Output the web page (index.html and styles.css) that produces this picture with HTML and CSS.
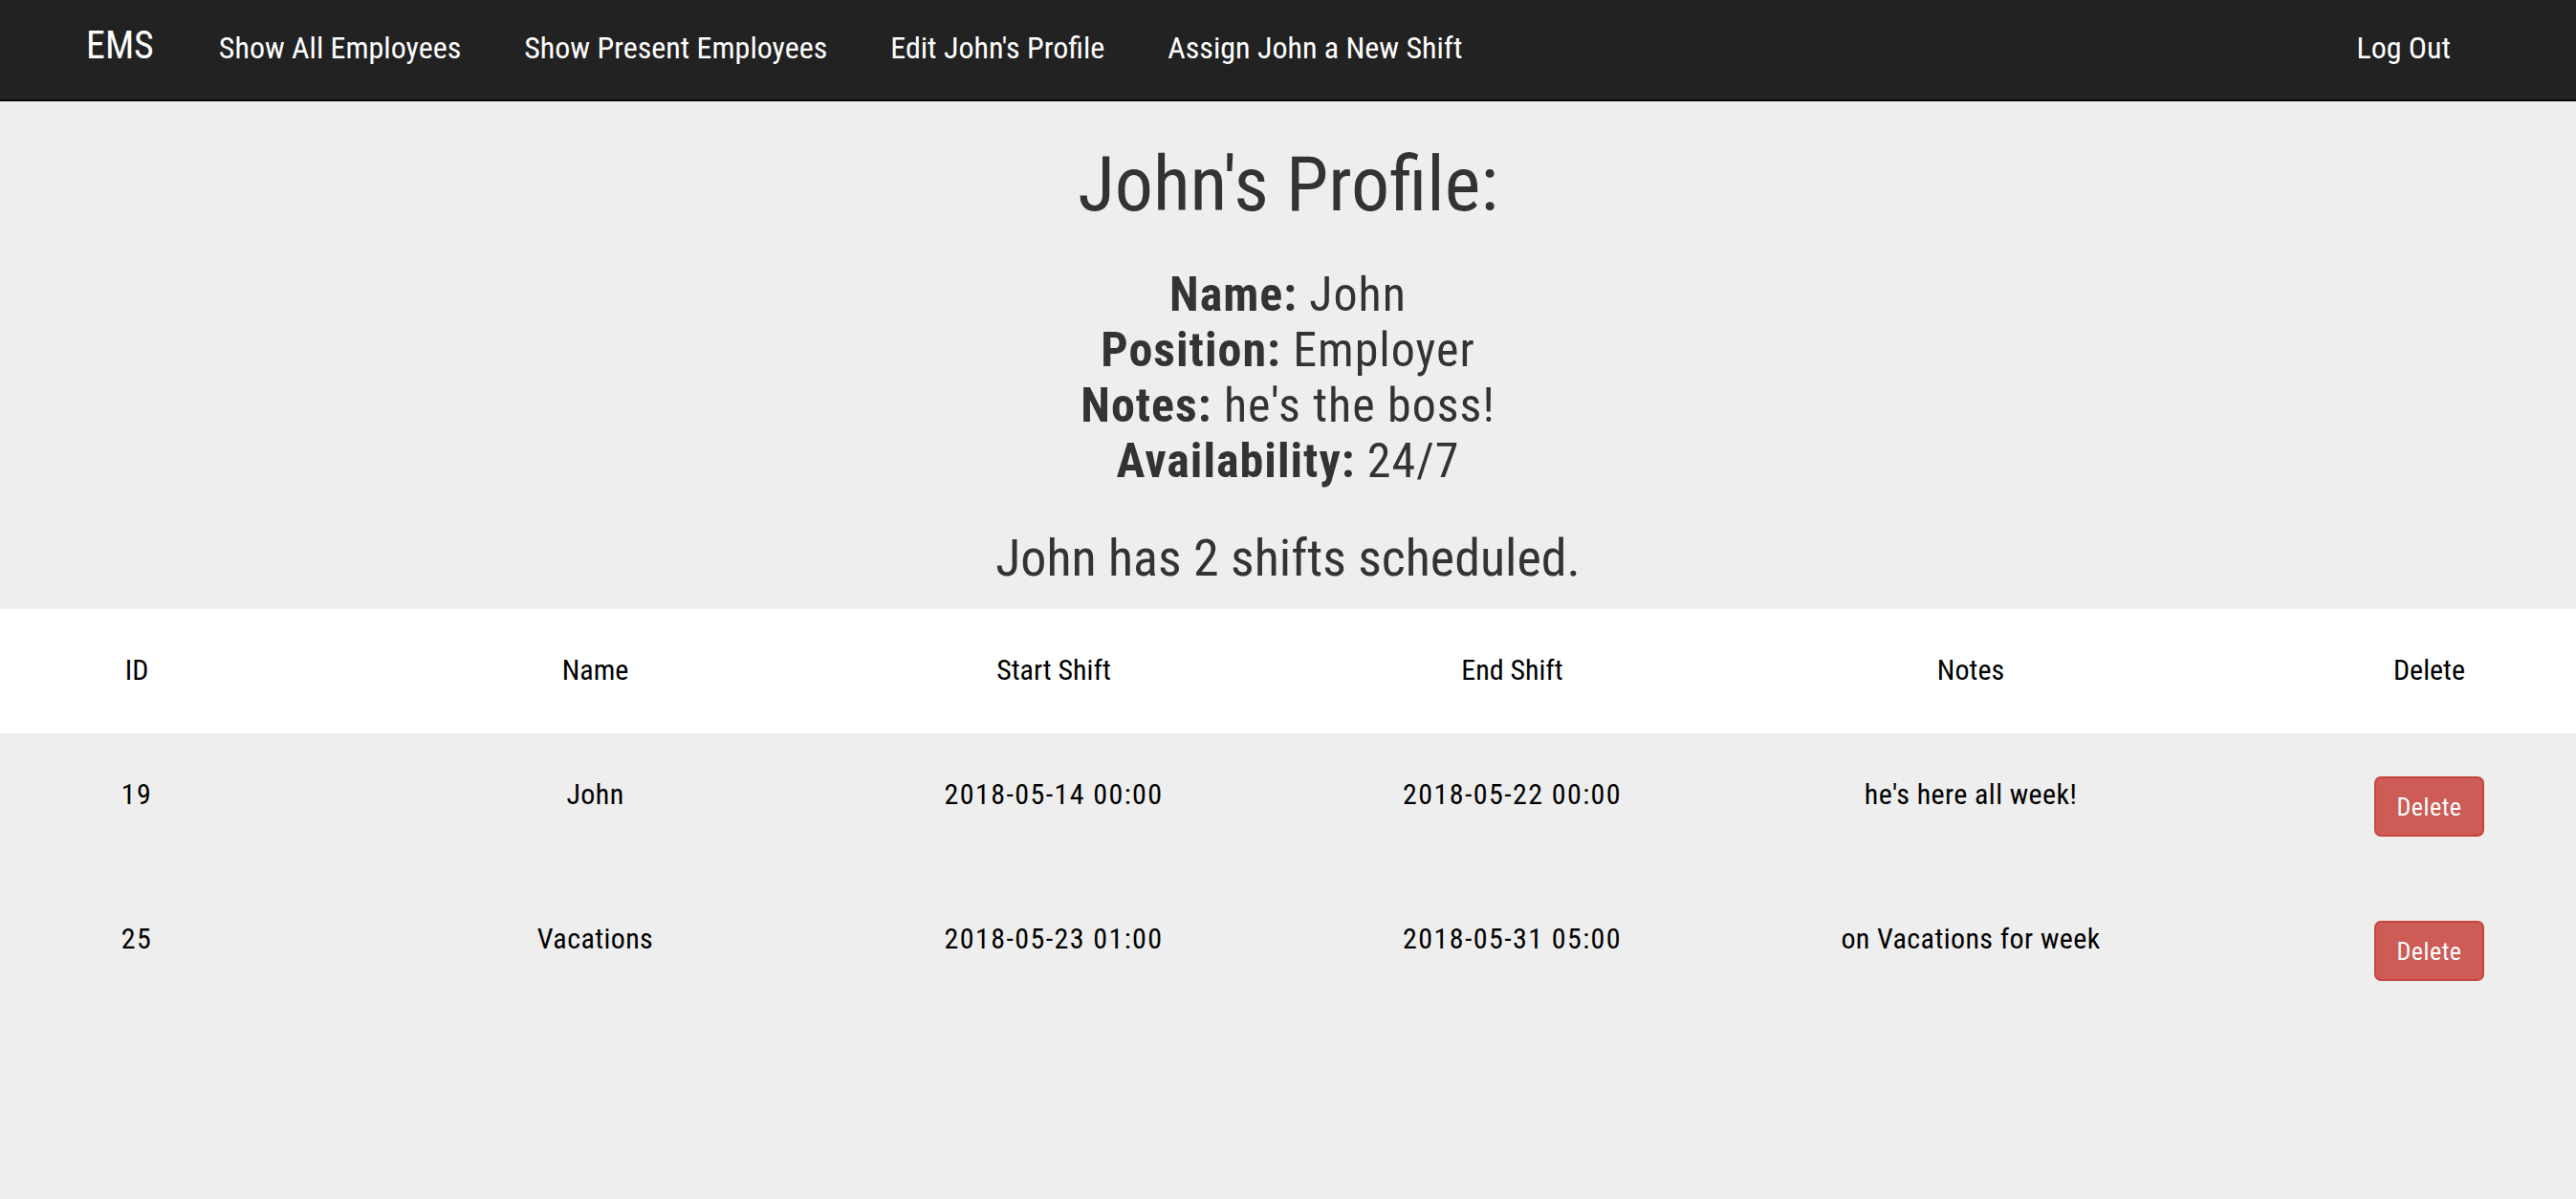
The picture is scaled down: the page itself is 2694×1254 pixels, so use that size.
FILE: index.html
```html
<!DOCTYPE html>
<html lang="en">
<head>
<meta charset="utf-8">
<title>EMS - John's Profile</title>
<link rel="stylesheet" href="styles.css">
</head>
<body>
<nav class="navbar">
  <a class="brand" href="#">EMS</a>
  <a class="nav-link" href="#">Show All Employees</a>
  <a class="nav-link" href="#">Show Present Employees</a>
  <a class="nav-link" href="#">Edit John's Profile</a>
  <a class="nav-link" href="#">Assign John a New Shift</a>
  <a class="nav-link logout" href="#">Log Out</a>
</nav>
<main class="content">
  <h1 class="title">John's Profile:</h1>
  <div class="profile">
    <div class="line"><span class="label">Name:</span> John</div>
    <div class="line"><span class="label">Position:</span> Employer</div>
    <div class="line"><span class="label">Notes:</span> he's the boss!</div>
    <div class="line"><span class="label">Availability:</span> 24/7</div>
  </div>
  <h2 class="shifts">John has 2 shifts scheduled.</h2>
  <div class="table">
    <div class="row head">
      <div class="cell">ID</div>
      <div class="cell">Name</div>
      <div class="cell">Start Shift</div>
      <div class="cell">End Shift</div>
      <div class="cell">Notes</div>
      <div class="cell">Delete</div>
    </div>
    <div class="row body">
      <div class="cell num">19</div>
      <div class="cell">John</div>
      <div class="cell num">2018-05-14 00:00</div>
      <div class="cell num">2018-05-22 00:00</div>
      <div class="cell">he's here all week!</div>
      <div class="cell action"><button class="btn-delete">Delete</button></div>
    </div>
    <div class="row body">
      <div class="cell num">25</div>
      <div class="cell">Vacations</div>
      <div class="cell num">2018-05-23 01:00</div>
      <div class="cell num">2018-05-31 05:00</div>
      <div class="cell">on Vacations for week</div>
      <div class="cell action"><button class="btn-delete">Delete</button></div>
    </div>
  </div>
</main>
</body>
</html>
```
FILE: styles.css
```css
* { box-sizing: border-box; }

html, body {
  margin: 0;
  padding: 0;
  background: #eeeeee;
  font-family: "Roboto Condensed", "Open Sans", sans-serif;
  color: #333333;
  min-height: 100%;
}

.navbar {
  display: flex;
  align-items: baseline;
  height: 106px;
  background: #222222;
  border-bottom: 2px solid #080808;
  padding: 28px 131px 0 90px;
  gap: 66px;
}

.navbar a {
  color: #ffffff;
  text-decoration: none;
  white-space: nowrap;
}

.brand {
  font-size: 40px;
  line-height: 40px;
  margin-right: 2px;
}

.nav-link {
  font-size: 32px;
  line-height: 32px;
}

.logout {
  margin-left: auto;
}

.content {
  padding-top: 43px;
  text-align: center;
}

.title {
  margin: 0;
  font-size: 80px;
  line-height: 88px;
  font-weight: 400;
  color: #333333;
}

.profile {
  margin-top: 42px;
  font-size: 50px;
  line-height: 58px;
  letter-spacing: 1px;
  color: #333333;
}

.label {
  font-weight: 700;
}

.shifts {
  margin: 43px 0 23px;
  font-size: 54px;
  line-height: 60px;
  font-weight: 400;
  color: #333333;
}

.row {
  display: grid;
  grid-template-columns: repeat(6, 200px);
  column-gap: 279.5px;
  padding-left: 43px;
  padding-right: 53px;
  font-size: 30px;
  line-height: 30px;
  color: #000000;
}

.cell {
  display: flex;
  justify-content: center;
  white-space: nowrap;
}

.row.body .cell {
  letter-spacing: 0.4px;
}

.row.body .cell.num {
  letter-spacing: 1.4px;
}

.row.head {
  background: #ffffff;
  padding-top: 49px;
  padding-bottom: 51px;
}

.row.body {
  padding-top: 45px;
  padding-bottom: 43px;
  align-items: start;
}

.row.body .cell {
  margin-top: 4px;
}

.row.body .cell.action {
  margin-top: 0;
}

.btn-delete {
  width: 115px;
  height: 63px;
  background: #cd5b56;
  border: 2px solid #c4463f;
  border-radius: 7px;
  color: #ffffff;
  font-family: "Roboto Condensed", "Open Sans", sans-serif;
  font-size: 26px;
  line-height: 26px;
  letter-spacing: 0.5px;
  padding: 0;
  cursor: pointer;
}
```
